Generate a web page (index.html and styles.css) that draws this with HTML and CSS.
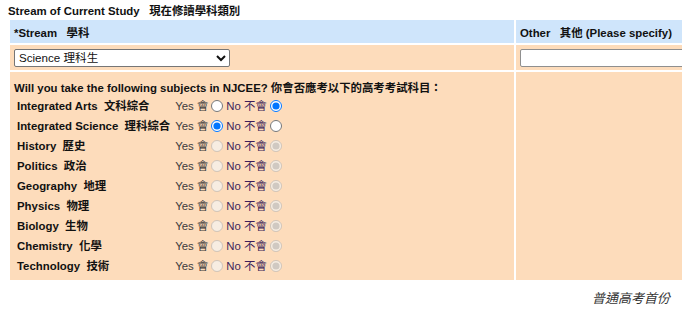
FILE: index.html
```html
<!DOCTYPE html>
<html>
<head>
    <title>Stream of Current Study</title>
    <link rel="stylesheet" href="styles.css">
</head>
<body>
    <div class="page">
        <div class="section-title">Stream of Current Study&nbsp;&nbsp; 現在修讀學科類別</div>

        <table class="form-table">
            <tr class="head-row">
                <td class="main-col">*Stream&nbsp;&nbsp; 學科</td>
                <td class="other-col">Other&nbsp;&nbsp; 其他 (Please specify)</td>
            </tr>
            <tr class="field-row">
                <td>
                    <select class="stream-select">
                        <option>Science 理科生</option>
                        <option>Arts 文科生</option>
                    </select>
                </td>
                <td><input type="text" class="other-input"></td>
            </tr>
            <tr class="field-row">
                <td class="subjects-cell">
                    <div class="question">Will you take the following subjects in NJCEE? 你會否應考以下的高考考試科目：</div>
                    <table class="subject-table">
                        <tbody id="subject-list">
                            <!-- 科目列表 -->
                        </tbody>
                    </table>
                </td>
                <td></td>
            </tr>
        </table>

        <div class="footnote">普通高考首份</div>
    </div>

    <script>
        // 科目列表
        const subjects = [
            { name: 'Integrated Arts', zh: '文科綜合', value: 'no', enabled: true },
            { name: 'Integrated Science', zh: '理科綜合', value: 'yes', enabled: true },
            { name: 'History', zh: '歷史', value: 'no', enabled: false },
            { name: 'Politics', zh: '政治', value: 'no', enabled: false },
            { name: 'Geography', zh: '地理', value: 'no', enabled: false },
            { name: 'Physics', zh: '物理', value: 'no', enabled: false },
            { name: 'Biology', zh: '生物', value: 'no', enabled: false },
            { name: 'Chemistry', zh: '化學', value: 'no', enabled: false },
            { name: 'Technology', zh: '技術', value: 'no', enabled: false }
        ];

        const tbody = document.getElementById('subject-list');
        subjects.forEach((s, i) => {
            const tr = document.createElement('tr');
            const dis = s.enabled ? '' : 'disabled';
            tr.innerHTML = `
                <td class="subject-name">${s.name}&nbsp;&nbsp;${s.zh}</td>
                <td class="subject-opts">
                    <span class="opt-yes">Yes 會</span><input type="radio" name="subj${i}" value="yes" ${s.value === 'yes' ? 'checked' : ''} ${dis}><span class="opt-no">No 不會</span><input type="radio" name="subj${i}" value="no" ${s.value === 'no' ? 'checked' : ''} ${dis}>
                </td>
            `;
            tbody.appendChild(tr);
        });
    </script>
</body>
</html>
```

FILE: styles.css
```css
html, body {
    margin: 0;
    padding: 0;
    background: white;
}
body {
    font-family: "Liberation Sans", Arial, "Noto Sans CJK TC", sans-serif;
    font-size: 11.4px;
    color: #111;
}
.page {
    width: 682px;
    overflow: hidden;
    padding: 4px 0 0 8px;
    box-sizing: border-box;
}
.section-title {
    font-weight: bold;
    line-height: 14px;
}
.form-table {
    width: 860px;
    border-spacing: 2px;
}
.form-table td {
    padding: 0 4px;
    vertical-align: middle;
}
.main-col {
    width: 496px;
}
.head-row td {
    background-color: #cfe5fb;
    height: 23px;
    font-weight: bold;
}
.field-row td {
    background-color: #fddcbb;
}
.field-row td:first-child {
    height: 25px;
}
.stream-select {
    width: 216px;
    height: 18px;
    font-family: "Liberation Sans", Arial, "Noto Sans CJK TC", sans-serif;
    font-size: 11.6px;
    padding: 0;
    margin: 0;
    border: 1px solid #767676;
    border-radius: 2px;
    background: white;
    color: #111;
}
.other-input {
    width: 320px;
    height: 18px;
    box-sizing: border-box;
    margin: 0;
    border: 1px solid #8f8f8f;
    border-radius: 2px;
}
.subjects-cell {
    padding: 9px 4px 4px !important;
    vertical-align: top !important;
}
.question {
    font-weight: bold;
    line-height: 14px;
}
.subject-table {
    border-spacing: 2px;
    margin-top: -1px;
}
.form-table .subject-table td {
    background: none;
    height: 18px;
    padding: 0 1px;
    white-space: nowrap;
}
.subject-name {
    font-weight: bold;
}
.form-table .subject-table .subject-name {
    padding-right: 2px;
}
.subject-opts input {
    width: 12px;
    height: 12px;
    margin: 0 3px;
    vertical-align: -2px;
}
.opt-yes {
    color: #3b3b3b;
}
.opt-no {
    color: #3d1f5a;
}
.footnote {
    text-align: right;
    font-style: italic;
    font-size: 13px;
    color: #333;
    padding-right: 12px;
    margin-top: 6px;
}
```
